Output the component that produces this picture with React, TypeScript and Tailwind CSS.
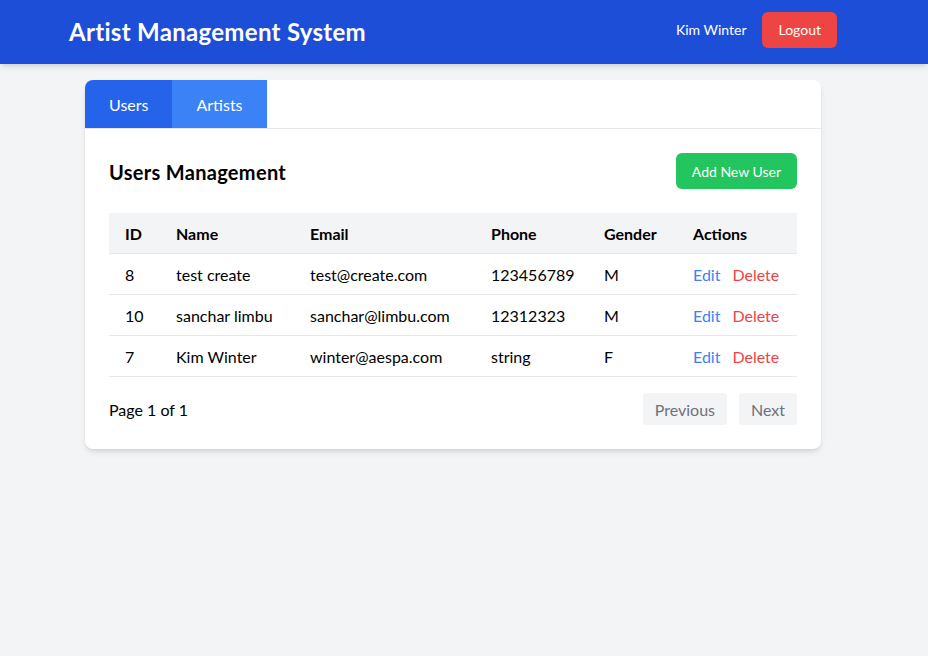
const users = [
  { id: 8, name: "test create", email: "test@create.com", phone: "123456789", gender: "M" },
  { id: 10, name: "sanchar limbu", email: "sanchar@limbu.com", phone: "12312323", gender: "M" },
  { id: 7, name: "Kim Winter", email: "winter@aespa.com", phone: "string", gender: "F" },
];

const App = () => {
  return (
    <div className="min-h-screen bg-[#f3f4f6] font-['Lato','Noto_Sans',sans-serif] text-black">
      {/* Header */}
      <header className="bg-[#1d4ed8] shadow-md">
        <div className="pr-[22px]">
          <div className="max-w-3xl mx-auto h-16 flex items-center justify-between">
            <h1 className="text-2xl font-bold text-white tracking-[0.3px]">Artist Management System</h1>
            <div className="flex items-center gap-4 mb-[5px]">
              <span className="text-sm text-white">Kim Winter</span>
              <button type="button" className="bg-[#ef4444] text-white text-sm px-4 py-2 rounded-md">
                Logout
              </button>
            </div>
          </div>
        </div>
      </header>

      {/* Main */}
      <main className="pr-[22px]">
        <div className="max-w-3xl mx-auto px-4 py-4">
          <div className="bg-white rounded-lg shadow-md overflow-hidden">
            <div className="flex border-b border-[#e5e7eb]">
              <button type="button" className="px-6 pt-[13px] pb-[11px] bg-[#2563eb] text-white">
                Users
              </button>
              <button type="button" className="px-6 pt-[13px] pb-[11px] bg-[#3b82f6] text-white">
                Artists
              </button>
            </div>

            <div className="p-6">
              <div className="flex items-center justify-between mb-6">
                <h2 className="text-xl font-bold tracking-[0.3px] pt-0.5">Users Management</h2>
                <button type="button" className="bg-[#22c55e] text-white text-sm px-4 pt-[9px] pb-[7px] rounded-md">
                  Add New User
                </button>
              </div>

              <table className="w-full table-fixed text-left">
                <thead>
                  <tr className="bg-[#f3f4f6] border-b border-[#e5e7eb]">
                    <th className="w-[51px] px-4 pt-[9px] pb-[7px] font-bold">ID</th>
                    <th className="w-[134px] px-4 pt-[9px] pb-[7px] font-bold">Name</th>
                    <th className="w-[181px] px-4 pt-[9px] pb-[7px] font-bold">Email</th>
                    <th className="w-[113px] px-4 pt-[9px] pb-[7px] font-bold">Phone</th>
                    <th className="w-[89px] px-4 pt-[9px] pb-[7px] font-bold">Gender</th>
                    <th className="px-4 pt-[9px] pb-[7px] font-bold">Actions</th>
                  </tr>
                </thead>
                <tbody>
                  {users.map((u) => (
                    <tr key={u.id} className="border-b border-[#e5e7eb]">
                      <td className="px-4 pt-[9px] pb-[7px]">{u.id}</td>
                      <td className="px-4 pt-[9px] pb-[7px]">{u.name}</td>
                      <td className="px-4 pt-[9px] pb-[7px]">{u.email}</td>
                      <td className="px-4 pt-[9px] pb-[7px]">{u.phone}</td>
                      <td className="px-4 pt-[9px] pb-[7px]">{u.gender}</td>
                      <td className="px-4 pt-[9px] pb-[7px]">
                        <button type="button" className="text-[#3b82f6] mr-3">Edit</button>
                        <button type="button" className="text-[#ef4444]">Delete</button>
                      </td>
                    </tr>
                  ))}
                </tbody>
              </table>

              <div className="flex items-center justify-between mt-4">
                <span className="pt-0.5">Page 1 of 1</span>
                <div className="flex gap-3">
                  <button type="button" disabled className="px-3 pt-[5px] pb-[3px] rounded bg-[#f3f4f6] text-[#6b7280]">
                    Previous
                  </button>
                  <button type="button" disabled className="px-3 pt-[5px] pb-[3px] rounded bg-[#f3f4f6] text-[#6b7280]">
                    Next
                  </button>
                </div>
              </div>
            </div>
          </div>
        </div>
      </main>
    </div>
  );
};

export default App;
